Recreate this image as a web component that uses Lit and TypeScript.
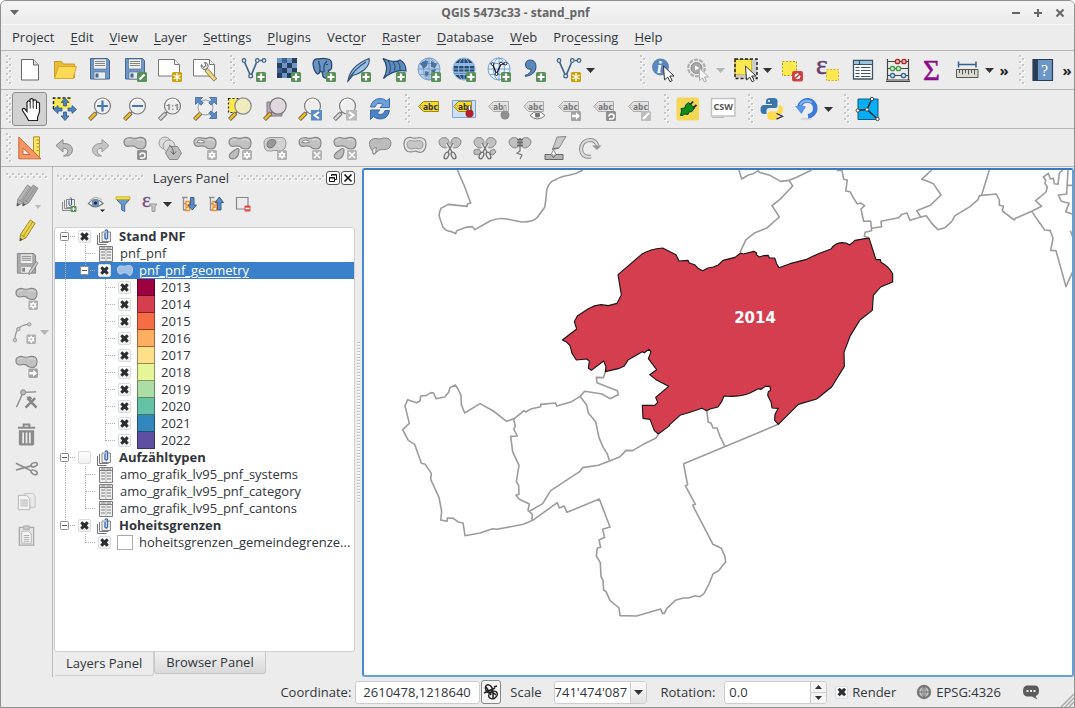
import { LitElement, html, svg, css, nothing } from "lit";
import type { TemplateResult } from "lit";
import { customElement, property, state } from "lit/decorators.js";
import { classMap } from "lit/directives/class-map.js";

/* ---------- shared icon fragments ---------- */

const badge = (fill: string, glyph: unknown) =>
  svg`<rect x="14" y="14" width="10" height="10" rx="1.5" fill=${fill}/>${glyph}`;
const plusBadge = badge("#5a9159", svg`<path d="M19 15.5v7M15.5 19h7" stroke="#fff" stroke-width="2.2"/>`);
const starGlyph = svg`<path d="M19 15v8M15.5 17l7 4M22.5 17l-7 4" stroke="#fff" stroke-width="1.4"/>`;
const starBadge = badge("#c9a20c", starGlyph);
const greyStar = badge("#b0b0b0", svg`<path d="M19 14.800l1.300 2.200h2.500L21.500 19l1.300 2.200h-2.500L19 23.400l-1.300-2.200h-2.500L16.500 19l-1.300-2h2.500z" fill="#fff"/><circle cx="19" cy="19" r="1" fill="#b0b0b0"/>`);
const greyCross = badge("#b4b4b4", svg`<path d="M16 16l6 6M22 16l-6 6" stroke="#fff" stroke-width="1.7"/>`);
const greyArrow = badge("#a3a3a3", svg`<path d="M15 17.7h4v-2.4l4 3.7-4 3.7v-2.4h-4z" fill="#fff"/>`);
const greyTurn = badge("#8f8f8f", svg`<path d="M17 22h2.5q2.500 0 2.500-2.500t-2.500-2.500q-2.500 0-2.500 2.500" fill="none" stroke="#fff" stroke-width="1.5"/>`);
const greyPencil = badge("#bdbdbd", svg`<path d="M16 22l6-6" stroke="#fff" stroke-width="2.2"/>`);

const blob = svg`<path d="M1 6Q1 1.800 7 1.500q5 1.600 9 0 7-.5 7 5 0 6.500-5 6.500-4.500-.3-6-2.500-3-1.200-5.500-.3Q1 11 1 6z" fill="#c1c1c1" stroke="#868686" stroke-width="1.200"/><path d="M3 5.500q1-2 5-2M14 4q5-1.500 7 1" fill="none" stroke="#dedede"/>`;
const blobLow = svg`<path d="M11 13.500q-1-2-3.500 0l-3.500 2.500q-3 2-2.700 5 2 3 5.500 1.500 4.200-2 4.200-9z" fill="#bdbdbd" stroke="#868686" stroke-width="1.200"/>`;
const hole = svg`<path d="M4 6.300q.2-2.500 3.500-2.300 4 .2 4 2.500-4 1-7.500-.2z" fill="#f4f4f4" stroke="#868686"/>`;
const page = svg`<path d="M.5 1.500h16l5 5v11.500H.5z" fill="#fff" stroke="#777"/><path d="M16.500 1.500v5h5" fill="#eee" stroke="#777"/>`;
const vNodes = svg`<path d="M2.500 4l5.500 12.500M9.500 16.500l5-12M17.500 2.500h2.500" fill="none" stroke="#436482" stroke-width="1.700"/><g fill="#dbe7f2" stroke="#436482" stroke-width="1.200"><circle cx="2" cy="2.500" r="1.800"/><circle cx="8.700" cy="18" r="1.900"/><circle cx="15.300" cy="2.500" r="1.800"/><circle cx="22" cy="2.500" r="1.800"/></g>`;
const handle = (c: string) =>
  svg`<path d="M1.500 22.500l6.500-6.500" stroke="#555" stroke-width="4"/><path d="M1.800 22.200l6-6" stroke=${c} stroke-width="2.600"/><path d="M7.500 16.500l2.500-2.500" stroke="#777" stroke-width="2"/>`;
const lens = (inner: unknown, c = "#f5bd1b") =>
  svg`${handle(c)}<circle cx="14.500" cy="9" r="8" fill="#eeeeee" stroke="#7c7c7c" stroke-width="1.200"/><path d="M8.500 8a6 6 0 0 1 10-4" fill="none" stroke="#fff" stroke-width="1.400"/>${inner}`;
const tag = (fill: string, stroke: string, ink: string, word = "abc", w = 21) =>
  svg`<path d="M1.500 9.500l5-5h${w - 6}v10h-${w - 6}z" fill=${fill} stroke=${stroke}/><circle cx="4.500" cy="9.500" r="1" fill="#fff" stroke=${stroke} stroke-width=".6"/><text x="6" y="12.500" font-size="8.500" font-weight="700" font-family="Noto Sans, sans-serif" fill=${ink}>${word}</text>`;
const greyTag = (word = "abc") => tag("#e2e2e2", "#aaa", "#777", word);
const cursor = svg`<path d="M11.500 8l10.500 10h-4.200l2.400 4.600-2.200 1.100-2.300-4.600-3.200 2.800z" fill="#fff" stroke="#333" stroke-width="1"/>`;
const pencil = (body: string, edge: string) =>
  svg`<path d="M16 1l5 3.500-9.500 15L5 23l.8-7z" fill=${body} stroke=${edge}/><path d="M18.500 3L8 19M5.800 16l5.700 3.500" stroke=${edge} fill="none" stroke-width=".8"/><path d="M5 23l.4-3.500 2.600 2z" fill="#555"/>`;
const floppy = (a: string, b: string) =>
  svg`<path d="M2.500.5h17l2 2v18.500h-19z" fill=${a} stroke=${b}/><path d="M5.500 1h13v10h-13z" fill="#efefef" stroke=${b} stroke-width=".6"/><path d="M7 3.500h10M7 5.500h10M7 7.500h10" stroke="#777" stroke-width=".9"/><path d="M6 14h11.500v7H6z" fill="#ececec" stroke=${b} stroke-width=".6"/><path d="M7.500 15.500h3v4h-3z" fill=${b}/>`;
const scissors = svg`<g fill="none" stroke="#ececec" stroke-width="3"><path d="M10 16l5-8M14 16L9 8"/></g><g fill="none" stroke="#6f6f6f" stroke-width="1.300"><path d="M10 16l5-9M14 16L9 7"/><ellipse cx="8.500" cy="19.500" rx="2" ry="3.500" transform="rotate(25 8.500 19.500)"/><ellipse cx="15.500" cy="19.500" rx="2" ry="3.500" transform="rotate(-25 15.500 19.500)"/></g>`;
const pair = svg`<path d="M10.800 9.500Q9 13 5 11.500.5 9.500 1 4.500q2.500-4 7-2.800 4 2 2.800 7.800z" fill="#c0c0c0" stroke="#8a8a8a"/><path d="M13.200 9.500q1.800 3.500 5.800 2 4.500-2 4-7-2.500-4-7-2.800-4 2-2.800 7.800z" fill="#c0c0c0" stroke="#8a8a8a"/>`;
const globe = (fill: string, line: string) =>
  svg`<circle cx="12" cy="11" r="11" fill=${fill} stroke=${line}/><g fill="none" stroke=${line}><ellipse cx="12" cy="11" rx="5.500" ry="11"/><path d="M12 0v22M1 11h22M2.500 5.500h19M2.500 16.500h19"/></g>`;

const icons: Record<string, unknown> = {
  newdoc: svg`<path d="M3.500 1.500h12l5 5.500v15h-17z" fill="#fff" stroke="#666"/><path d="M15.500 1.500v5.500h5" fill="#ddd" stroke="#666"/>`,
  open: svg`<path d="M1.500 20V3.500h7l2 2.500h11v14z" fill="#e8bd35" stroke="#c99c26"/><path d="M1.500 20.500l4-12h18l-3.500 12z" fill="#fcda55" stroke="#d7ab30"/>`,
  save: floppy("#6f97c7", "#476892"),
  saveas: svg`${floppy("#6f97c7", "#476892")}${badge("#5a9159", svg`<path d="M16.500 21.500l5-5" stroke="#fff" stroke-width="2.200"/>`)}`,
  composer: svg`${page}${starBadge}`,
  composers: svg`${page}<path d="M13 11.500l9.500 10.500" stroke="#8c7434" stroke-width="4.500"/><path d="M13.500 12l8.500 9.500" stroke="#ecd58c" stroke-width="3"/><path d="M8.500 6.500a3.500 3.500 0 1 0 3 -2l1.500 3-2.500 2z" fill="#ddd" stroke="#666"/>`,
  vector: svg`${vNodes}${plusBadge}`,
  raster: svg`<path d="M0 0h20v20H0z" fill="#6d96c4"/><path d="M0 5h5v-5h5v5h-5v5H0zM10 5h5v5h-5zM15 0h5v5h-5zM5 10h5v5H5zM15 10h5v5h-5zM0 15h5v5H0zM10 15h5v5h-5z" fill="#24405f"/><path d="M5 0h5v5H5zM0 10h5v5H0z" fill="#3c628d"/>${plusBadge}`,
  postgis: svg`<path d="M7 1Q1 0 1 6q1 8 4.500 10 2 0 2.500-3 1 1 2 .500l1 5q2 2.500 4.500 1 1.500-5 1-7 2 0 3-2Q21 1 15 .800 11 0 7 1z" fill="#6a93c4" stroke="#27486f" stroke-width="1.300"/><path d="M6.500 3q2 5 1.500 10M15 3q-4 4-3 9 1 2-1 2M14 6.500h2" fill="none" stroke="#27486f" stroke-width="1.200"/>${plusBadge}`,
  feather: svg`<path d="M1 23Q3 8 22 .500q1.500 6-5 11.500-5 4-11.500 5.500z" fill="#9ec0e2" stroke="#30547c" stroke-width="1.200"/><path d="M1 23Q7 11 19 4" fill="none" stroke="#30547c" stroke-width="1.400"/>${plusBadge}`,
  fin: svg`<path d="M1 .500q12 5 17 1.500 6 3 6 11Q12 11 1.500 20.500 8 9 1 .500z" fill="#5f8cbf" stroke="#27486f" stroke-width="1.200"/><path d="M6 2.500q4 6 1.500 12.500M11 3.500q3.500 5 1.500 9M15.500 3q3.500 5 2.500 9" fill="none" stroke="#27486f"/>${plusBadge}`,
  wms: svg`${globe("#b4cde8", "#7ba0cb")}<path d="M3 6q4-5 8-3l-1 5-4 3-1-3zM14 3l6 3-2 4-4-1zM8 13l4 1-2 5-2-2zM14 12l5-1-2 6-2-1z" fill="#4a719f"/>${plusBadge}`,
  wcs: svg`${globe("#2c4a6b", "#8cb8e6")}<path d="M2 7h20M2 14.500h20" stroke="#8cb8e6" stroke-width="2"/>${plusBadge}`,
  wfs: svg`${globe("#eef5fc", "#74a3d8")}<path d="M5.500 6l4 10 4.500-10h4" fill="none" stroke="#223" stroke-width="1.400"/><g fill="#fff" stroke="#223"><circle cx="5.500" cy="6" r="1.400"/><circle cx="9.500" cy="16" r="1.500"/><circle cx="14" cy="5.500" r="1.400"/><circle cx="18.500" cy="5.500" r="1.400"/></g>${plusBadge}`,
  comma: svg`<path d="M3 17.500q6-2 6.200-6.500Q4 12 3.500 7 3.500 2 8.500 2q5.500.3 5.500 7 0 7.500-10.500 9.500z" fill="#5b86b8" stroke="#2e5580"/>${plusBadge}`,
  newvector: svg`${vNodes}${starBadge}`,
  identify: svg`<circle cx="8.500" cy="9" r="8.500" fill="#5b87bd"/><text x="5" y="15" font-size="17" font-weight="700" font-style="italic" font-family="Liberation Serif, serif" fill="#fff">i</text>${cursor}`,
  action: svg`<circle cx="9.500" cy="10" r="8.300" fill="#ececec" stroke="#b0b0b0" stroke-width="2.200" stroke-dasharray="4 1.200"/><circle cx="9.500" cy="10" r="5.500" fill="#a8a8a8" stroke="#8e8e8e"/><path d="M8 7.500l4.500 2.500-4.500 2.500z" fill="#fff"/><path d="M12.500 10l9 9h-4l2 4-2 1-2-4-3 2.500z" fill="#f4f4f4" stroke="#aaa"/>`,
  select: svg`<path d="M1 1.500h17v15.500H1z" fill="#fce94f" stroke="#a98b1a"/><path d="M18 1.500h5v18.500H1v-3h17z" fill="#ccc"/><path d="M1 1h22v19.500H1z" fill="none" stroke="#222" stroke-width="1.500" stroke-dasharray="3 2"/>${cursor}`,
  deselect: svg`<path d="M1.500 3.500h14v14h-14z" fill="#fce94f" stroke="#b59a20" stroke-dasharray="2 1.500"/><rect x="11" y="13" width="11" height="10.500" rx="2" fill="#d94141"/><circle cx="16.500" cy="18.300" r="3.500" fill="#fff" stroke="#a33"/><path d="M14 20.500l5-4.500" stroke="#d22" stroke-width="1.500"/>`,
  expr: svg`<text x="0" y="15.500" font-size="28" font-family="Liberation Serif, serif" fill="#6b3f70" stroke="#6b3f70" stroke-width=".5">ε</text><path d="M10.500 11.500h12v11h-12z" fill="#fce94f" stroke="#d1b52e" stroke-dasharray="2 1.500"/>`,
  table: svg`<path d="M2.500 2.500h19v18.500h-19z" fill="#fff" stroke="#3b5366" stroke-width="1.300"/><path d="M3 3h18v3.500H3z" fill="#9cc3de"/><path d="M2.500 6.500h19M8.500 3v3M4.500 9.500h4M10 9.500h9.500M4.500 12.500h4M10 12.500h9.500M4.500 15.500h4M10 15.500h9.500M4.500 18.500h4M10 18.500h9.500" stroke="#3b5366" stroke-width="1.200"/>`,
  abacus: svg`<path d="M1.500 1v21M22.500 1v21M0 22h24M0 23.500h24M1.500 3.500h21M1.500 10.500h21M1.500 17.500h21" stroke="#444" stroke-width="1.200"/><g stroke-width="1.300"><g fill="#f6b8b8" stroke="#a22"><circle cx="11.500" cy="3.500" r="2.200"/><circle cx="18" cy="3.500" r="2.200"/></g><g fill="#c8ecc8" stroke="#4a944a"><circle cx="6.500" cy="10.500" r="2.200"/><circle cx="12.500" cy="10.500" r="2.200"/></g><g fill="#c4dcf2" stroke="#3d6590"><circle cx="6.500" cy="17.500" r="2.200"/><circle cx="17.500" cy="17.500" r="2.200"/></g></g>`,
  sigma: svg`<text x="2" y="21.500" font-size="29" font-family="Liberation Serif, serif" fill="#8b0a8b" stroke="#8b0a8b" stroke-width=".5">Σ</text>`,
  measure: svg`<path d="M2.500 6.500h17.500M2.500 3.500v6M20 3.500v6" stroke="#33618f" stroke-width="1.500"/><path d="M.5 11.500h21.500v8H.5z" fill="#d8dccf" stroke="#555"/><path d="M3.500 12v3M6.500 12v4.500M9.500 12v3M12.500 12v4.500M15.500 12v3M18.500 12v4.500" stroke="#555"/>`,
  help: svg`<path d="M2 1.500h19.500v21H2z" fill="#6c96c8" stroke="#2b3e55" stroke-width="1.200"/><path d="M2 1.500h5v21H2z" fill="#2b3e55"/><text x="10" y="17.500" font-size="16" font-family="Liberation Serif, serif" fill="#fff">?</text>`,
  pan: svg`<g transform="translate(4 .5)"><path d="M6.500 23L5 20l-4.500-7q-.5-2.500 2-2l2.500 3V5q.5-2 2-1.500l1 .5 0-2q2-1.800 3.200 0V3q2-1.500 3.300.500v1.500q2.500-1 3 1v8.500l-2 5.500V23z" fill="#fff" stroke="#222" stroke-width="1.200"/><path d="M8.200 4v7M11.200 3v8M14.500 4v7.500" stroke="#222"/></g>`,
  panselect: svg`<path d="M.5 1h17v11H.5z" fill="#fce94f"/><path d="M.5 12V1h17" fill="none" stroke="#222" stroke-width="1.500" stroke-dasharray="3 2"/><g fill="#4f81bd" stroke="#2e5a90" stroke-width=".8"><path d="M12 1l4 4.500h-2.500V9h-3V5.500H8zM12 23.500l-4-4.500h2.500v-4h3v4H16zM.500 12.500l4.500-4V11h4v3H5v2.500zM23.500 12.500l-4.500-4V11h-4v3h4v2.500z"/></g>`,
  zoomin: lens(svg`<path d="M14.500 3.500v11M9 9h11" stroke="#4377ad" stroke-width="2.200"/>`),
  zoomout: lens(svg`<path d="M9 9h11" stroke="#4377ad" stroke-width="2.200"/>`),
  zoomone: lens(svg`<text x="7.800" y="12.500" font-size="9.500" font-weight="700" font-family="Noto Sans, sans-serif" fill="#888">1:1</text>`, "#d6d6d6"),
  zoomfull: svg`${handle("#f5bd1b")}<circle cx="12.500" cy="10.500" r="7.500" fill="#eee" stroke="#999"/><g fill="#5b8cc4" stroke="#2e5a90" stroke-width=".7"><path d="M2.500.500h7L7.200 2.800l3 3-2.400 2.400-3-3L2.500 7.500zM23.500.500v7l-2.300-2.300-3 3-2.400-2.400 3-3L16.500.500zM23.500 21.500h-7l2.300-2.300-3-3 2.400-2.400 3 3 2.300-2.300z"/></g>`,
  zoomsel: svg`<path d="M.5 1.500h13v14H.5z" fill="#fce94f" stroke="#222" stroke-width="1.200" stroke-dasharray="2 2"/>${handle("#f5bd1b")}<circle cx="15" cy="9" r="8.200" fill="#f1ecbf" stroke="#888" stroke-width="1.200"/>`,
  zoomlayer: svg`<path d="M4 5h15v14H4z" fill="#b9aab9" stroke="#857585"/>${handle("#f5bd1b")}<circle cx="15" cy="9" r="8.200" fill="#e0dae0" fill-opacity=".95" stroke="#777" stroke-width="1.200"/>`,
  zoomlast: svg`${lens(nothing)}<path d="M13 13h11v10.500H13z" fill="#5b8cc4"/><path d="M21 15l-4.500 3.300L21 21.500" fill="none" stroke="#fff" stroke-width="2"/>`,
  zoomnext: svg`${lens(nothing, "#d6d6d6")}<path d="M13 13h11v10.500H13z" fill="#bbb"/><path d="M16 15l4.500 3.300L16 21.500" fill="none" stroke="#fff" stroke-width="2"/>`,
  refresh: svg`<path d="M2.500 10Q4 2 12 1.500q4 0 6.500 2.500l3-2.500v9h-9.500l3-3Q9 4 7 10z" fill="#6d9fd8" stroke="#3b6ca8"/><path d="M21.500 13.500Q20 22 12 22q-4 0-6.500-2.500l-3 3v-9.500h9.500l-3 3.500q6 3 8-3z" fill="#4b83c6" stroke="#3b6ca8"/>`,
  label: tag("#f3d92c", "#a08a10", "#333"),
  labelpin: svg`<path d="M.5 3.500h23v17H.5z" fill="#cfe0f5" stroke="#7ba7dd"/>${tag("#f3d92c", "#a08a10", "#333", "ab", 19)}<circle cx="17.500" cy="16.500" r="4" fill="#b3202a"/><path d="M16.500 13V8.500h2V13" fill="#fff" stroke="#777"/>`,
  labelpin2: svg`${greyTag("ab")}<circle cx="18" cy="18" r="4.500" fill="#8f8f8f"/><path d="M17 14V8.500h2V14" fill="#fff" stroke="#999"/>`,
  labelshow: svg`${greyTag()}<path d="M8 18.500q7.500-8 15 0-7.500 7-15 0z" fill="#fff" stroke="#777"/><circle cx="15.500" cy="18" r="2.600" fill="#777"/>`,
  labelmove: svg`${greyTag()}${greyArrow}`,
  labelrot: svg`${greyTag()}${greyTurn}`,
  labeledit: svg`${greyTag()}${greyPencil}`,
  plug: svg`<rect x=".5" y=".5" width="22.500" height="23" rx="2.500" fill="#f3d755"/><path d="M4.500 18.500l1-4.500-.5-2.500 4-.5.5-3 3-2.500 6 5.500-2.500 3.500-3 .5-1 2.500-3.500-.5-1.500 1.500z" fill="#118a1c" stroke="#0a4a10"/><path d="M14.500 7.500l2.500-3M17.500 10.500l3-2.500" stroke="#222" stroke-width="1.800"/>`,
  csw: svg`<path d="M.5 1.500h23.500v17.500H.5z" fill="#fff" stroke="#c2c2c2" stroke-width="1.500"/><path d="M1 20.500h12" stroke="#bbb"/><text x="2.500" y="13" font-size="9" font-weight="700" font-family="Noto Sans, sans-serif" fill="#555">CSW</text>`,
  python: svg`<path d="M10.500 1q-4.500 0-4.500 3v3h6v1H4Q.5 8 .5 12.500T4 17h2.500v-3q0-3 3-3H15q2.500 0 2.500-2.500V4q0-3-4-3z" fill="#3a76ab"/><circle cx="9" cy="4" r="1" fill="#fff"/><path d="M13.500 23q4.500 0 4.500-3v-2.500h-6V17h8q3 0 3-4.500T20 8.500h-1.500v3q0 3-3 3h-5.500q-2.500 0-2.500 2.500v3q0 3 4 3z" fill="#ffd94a"/><path d="M16.500 16.500l6 2.800-6 2.800" fill="none" stroke="#222" stroke-width="1.200"/>`,
  reload: svg`<ellipse cx="11" cy="22" rx="6" ry="1.200" fill="#d4d8de"/><path d="M4.500 9.500A8 8 0 1 1 13 19.300" fill="none" stroke="#3a7bdc" stroke-width="4.600"/><path d="M5 8A8 8 0 0 1 17 5.500" fill="none" stroke="#86b4f2" stroke-width="2"/><path d="M0 9h10.500v1.500L6.500 17z" fill="#5a95e8"/>`,
  topology: svg`<path d="M2 2h20v20.500H2z" fill="#06aef5" stroke="#155a7c"/><path d="M1 13.500l10-1 5-11M11 12.500l10.500 9.500" fill="none" stroke="#222" stroke-width="1.400"/><g fill="#fff" stroke="#444"><circle cx="1.800" cy="13.500" r="1.700"/><circle cx="11" cy="12.500" r="1.700"/><circle cx="16" cy="2" r="1.700"/><circle cx="21.500" cy="22" r="1.700"/></g>`,
  triangle: svg`<path d="M15.500.800h6v20h-6z" fill="#fbe26a" stroke="#b49526"/><path d="M18.500 4h3M18.500 7.500h3M18.500 11h3M18.500 14.500h3" stroke="#b49526"/><path d="M.800 1v21.800h22.200zM5 12l7 6.500H5z" fill="#f79663" fill-rule="evenodd" stroke="#c96a38"/>`,
  undo: svg`<path d="M3 9.500L10 3.500v4q8.500-.5 9.500 6 0 4.500-4.500 6.500H10.500q5-2 4.500-5-.5-3-5-3v4z" fill="#bcbcbc" stroke="#8a8a8a"/>`,
  redo: svg`<path d="M21 9.500L14 3.500v4q-8.500-.5-9.500 6 0 4.500 4.500 6.500h4.500q-5-2-4.500-5 .5-3 5-3v4z" fill="#c6c6c6" stroke="#9a9a9a"/>`,
  rotate: svg`${blob}${greyTurn}`,
  simplify: svg`<circle cx="7" cy="7" r="6" fill="#ddd" stroke="#999"/><circle cx="11" cy="10" r="6" fill="#ddd" stroke="#999"/><path d="M11.500 10.500h8l4 6.500-4 6.500h-8L7.500 17z" fill="#bdbdbd" stroke="#888"/><path d="M11 9q4.500 2 4.500 9M13 15.500l2.500 3 2.500-3" fill="none" stroke="#666"/>`,
  ring: svg`${blob}${hole}${greyStar}`,
  part: svg`${blob}${blobLow}${greyStar}`,
  fillring: svg`<path d="M1 6Q2 1.500 8 1.500h11q4 .5 4 6t-4 7h-8q-8 2-9.500-2.500z" fill="#d2d2d2" stroke="#999"/><path d="M4 9q0-5 5-5.500 4 0 4 3-2 5.500-6 5.500-3-.5-3-3z" fill="#999" stroke="#777"/>${greyStar}`,
  delring: svg`${blob}${hole}${greyCross}`,
  delpart: svg`${blob}${blobLow}${greyCross}`,
  reshape: svg`<path d="M1.500 8.500Q1 3 7 2.500q5 1 9-.5 6.500-.5 7 5-.5 7-7 6.500-4-1-8 3Q5 21 4.500 15 2 12.500 1.500 8.500z" fill="#bcbcbc" stroke="#888"/><path d="M4.500 14q.5-2.500 4-2.500-1 2.500-.5 4.500-3 4-3.500-2z" fill="#eee" stroke="#888"/>`,
  offset: svg`<path d="M1 8q0-7 7-6.500 4 1.200 8 0 7 0 7 6.500 0 7-5.500 8.500-3-.5-5-1.500-5 1.500-8 .5Q1 13 1 8z" fill="#e4e4e4" stroke="#888" stroke-width="1.200"/><path d="M4 8.500Q4 4.500 8.500 4.500q4 1.200 7 0 4.500 0 4.500 4 0 4-3.500 4.500-4-1.500-8.500 0Q4 12.500 4 8.500z" fill="#c6c6c6" stroke="#999"/>`,
  split: svg`${pair}${scissors}`,
  splitpart: svg`${pair}<path d="M1 14l5-1 2 3-3 3-4-1zM17 15l4-2 2 3-3 3-3-1z" fill="#bbb" stroke="#888"/>${scissors}`,
  merge: svg`${pair}<path d="M9 3.500h6M9 6.500h6M9 9.500h6M12 2v10" stroke="#666" stroke-width="1.300"/><path d="M12 12v3l-3 2 5 2-2 4" fill="none" stroke="#777" stroke-width="1.200"/>`,
  nodeadd: svg`<path d="M14 1l9-.5-7 11.500-6.500 1.500z" fill="#c8c8c8" stroke="#8a8a8a"/><path d="M9.500 13l6-1" stroke="#777" stroke-width="1.500"/><path d="M2 18.500h6l2.500 3 2.500-3h7v5H2z" fill="#b5b5b5" stroke="#666"/><path d="M10.500 14l2 3.500-2 3-2-3z" fill="#fff" stroke="#888"/>`,
  rotpoint: svg`<path d="M13 20.500Q4 22 3 13.500 3.500 4.500 12 4q6 0 7.500 6" fill="none" stroke="#8a8a8a" stroke-width="4"/><path d="M13 20.500Q4 22 3 13.500 3.500 4.500 12 4q6 0 7.500 6" fill="none" stroke="#dcdcdc" stroke-width="2.200"/><path d="M14 9.500h9.500L19 14z" fill="#999"/>`,
  pencils: svg`<g transform="translate(-3 -1)">${pencil("#b5b5b5", "#8d8d8d")}</g><g transform="translate(3 -1)">${pencil("#a8a8a8", "#8d8d8d")}</g>`,
  pencil: pencil("#e9d44a", "#9b8a2c"),
  saveedit: svg`${floppy("#ababab", "#858585")}<path d="M22 9l2 1.500-6.500 10-3 2 .5-3.500z" fill="#ccc" stroke="#888"/>`,
  addfeature: svg`${blob}${greyStar}`,
  curve: svg`<path d="M2 20Q2 4 17 3.500" fill="none" stroke="#999" stroke-width="1.400"/><g fill="#ccc" stroke="#999"><circle cx="2" cy="20" r="1.800"/><circle cx="5.500" cy="8.500" r="1.800"/><circle cx="17" cy="3.500" r="1.800"/></g>${greyStar}`,
  movefeature: svg`${blob}${greyArrow}`,
  node: svg`<path d="M1.500 19L8.500 3.500 22 3" fill="none" stroke="#8a8a8a" stroke-width="1.400"/><circle cx="8.500" cy="3.500" r="2.700" fill="#bbb" stroke="#888"/><path d="M11 19.500l10-10M13 9.500l9.500 10" stroke="#888" stroke-width="2.600"/><path d="M12 8l4-.500 2 2.500-3 2.500z" fill="#888"/>`,
  trash: svg`<path d="M3 5h18M9 4V1.500h6V4" fill="none" stroke="#8b8b8b" stroke-width="2"/><path d="M4 7.500h16v14.500q0 1.500-1.500 1.500h-13Q4 23.500 4 22z" fill="#8b8b8b"/><path d="M8.500 10v11M12 10v11M15.500 10v11" stroke="#ececec" stroke-width="1.800"/>`,
  cut: svg`<path d="M1 6.500l16 8M1 13.500l17-4.500" stroke="#8b8b8b" stroke-width="1.700"/><g fill="none" stroke="#8b8b8b" stroke-width="1.500"><ellipse cx="20" cy="8" rx="3.500" ry="2" transform="rotate(-20 20 8)"/><ellipse cx="20" cy="16" rx="3.500" ry="2" transform="rotate(28 20 16)"/></g>`,
  copy: svg`<path d="M9.500 2.500h9l2.500 2.500v12H9.500z" fill="#e9e9e9" stroke="#c4c4c4"/><path d="M3.500 4.500h8.500l3.500 3.500v11.500h-12z" fill="#f3f3f3" stroke="#b4b4b4"/><path d="M5.500 9.500h8M5.500 11.500h8M5.500 13.500h8M5.500 15.500h8" stroke="#b4b4b4"/>`,
  paste: svg`<path d="M4.500 2.500h15v18.500h-15z" fill="#e4e4e4" stroke="#aaa" stroke-width="1.400"/><path d="M9 1h6v3.500H9z" fill="#ccc" stroke="#aaa"/><path d="M7 6.500h7l3 3v9.500H7z" fill="#f8f8f8" stroke="#b4b4b4"/><path d="M9 11h6M9 13h6M9 15h6M9 17h6" stroke="#aaa"/>`,
};

const small: Record<string, unknown> = {
  addgroup: svg`<path d="M1.500 6v8.500h8M3.500 4v8.500h8" fill="none" stroke="#888"/><path d="M5.500 3.500h8v8h-8z" fill="#e8e8e8" stroke="#888"/><path d="M8 4.500V9q1.500 1.500 2.500 0V2.500q-1-1.500-1.500 0" fill="none" stroke="#365f91"/><rect x="9.500" y="10" width="6" height="6" rx="1" fill="#5a9159"/><path d="M12.500 11v4M10.500 13h4" stroke="#fff"/>`,
  eye: svg`<path d="M.500 7.500Q7-.5 15 7.500 7 14 .500 7.500z" fill="#fff" stroke="#777" stroke-width="1.200"/><circle cx="7.500" cy="7" r="3.800" fill="#6a93c4"/><circle cx="7.500" cy="7" r="1.600" fill="#222"/><path d="M2 4Q8-1 14 4" fill="none" stroke="#aaa"/><path d="M12 13.500h5l-2.500 2.500z" fill="#222"/>`,
  filter: svg`<path d="M1.500 3.500h13L9.700 9v6.500l-3-1.500V9z" fill="#6c98cc" stroke="#41699b"/><path d="M1 .800h14v2.700H1z" fill="#f4e14a" stroke="#c2a920" stroke-width=".8"/>`,
  exprfilter: svg`<text x="0" y="10.500" font-size="21" font-family="Liberation Serif, serif" fill="#7b5080" stroke="#7b5080" stroke-width=".4">ε</text><path d="M7 8h8L13 10.500v5h-3v-5z" fill="#c6c6c6" stroke="#999"/>`,
  expand: svg`<path d="M1 1.500h5.500M2.500 2v12h3.500M2.500 7.500h3" fill="none" stroke="#8f8f8f" stroke-width="1.300"/><path d="M5 5.500h3.500v3.500H5zM5 11h3.500v3.500H5z" fill="#fff" stroke="#f28a1c" stroke-width="1.300"/><path d="M9.500 1.500h3.500v7.500h2.500l-4.200 5-4.300-5h2.500z" fill="#5b8cc4" stroke="#2e5580" stroke-width=".9"/>`,
  collapse: svg`<path d="M1 1.500h5.500M2.500 2v12h3.500M2.500 7.500h3" fill="none" stroke="#8f8f8f" stroke-width="1.300"/><path d="M5 5.500h3.500v3.500H5zM5 11h3.500v3.500H5z" fill="#fff" stroke="#f28a1c" stroke-width="1.300"/><path d="M9.500 14h3.500V6.500h2.500L11.300 1 7 6.500h2.500z" fill="#5b8cc4" stroke="#2e5580" stroke-width=".9"/>`,
  remove: svg`<path d="M1.500 1.500h11.500v11.500H1.500z" fill="#ececec" stroke="#888" stroke-width="1.200"/><rect x="9.500" y="9.500" width="6" height="6" rx="1" fill="#e04848"/><path d="M10.500 12.500h4" stroke="#fff" stroke-width="1.300"/>`,
  group: svg`<path d="M.500 6v9.500h9M2.500 4v9.500h9" fill="none" stroke="#777"/><path d="M5 3h8.500v9.500H5z" fill="#eee" stroke="#888"/><path d="M8 4v5q1.500 2 2.500 0V1.500Q9 0 8 2" fill="none" stroke="#3e6db5" stroke-width="1.400"/>`,
  tbl: svg`<path d="M1.500.500h13v15h-13z" fill="#efefef" stroke="#7d7d7d"/><path d="M2 3.500h12M3 2h4M9 2h4M3 6h4M9 6h4M3 9h4M9 9h4M3 12h4M9 12h4" stroke="#7d7d7d"/><path d="M8 1v14" stroke="#999" stroke-width=".6"/>`,
  poly: svg`<path d="M.5 6q.2-3.500 4.500-3 3 1 5.500-.5 5-.5 5 3.500 0 5.500-2.500 6.500-2-.5-3.500-2.500-3-1-5.500 1-3.500.5-3.500-5z" fill="#9fc0e4" stroke="#b9d2ee"/>`,
};

const icon = (name: string) => html`<svg class="ic" viewBox="0 0 24 24" aria-hidden="true">${icons[name]}</svg>`;
const smallIcon = (name: string) => html`<svg class="sm" viewBox="0 0 16 16" aria-hidden="true">${small[name]}</svg>`;
const down = html`<svg class="tri" viewBox="0 0 9 5" aria-hidden="true"><path d="M0 0h9L4.500 5z"/></svg>`;

/* ---------- data ---------- */

const menus: [string, string, string][] = [
  ["Pro", "j", "ect"], ["", "E", "dit"], ["", "V", "iew"], ["", "L", "ayer"], ["", "S", "ettings"],
  ["", "P", "lugins"], ["Vect", "o", "r"], ["", "R", "aster"], ["", "D", "atabase"], ["", "W", "eb"],
  ["Pro", "c", "essing"], ["", "H", "elp"],
];

/* A trailing "+" adds a drop-down arrow, "-" a disabled one. */
const bars: string[][][] = [
  [
    ["newdoc", "open", "save", "saveas", "composer", "composers"],
    ["vector", "raster", "postgis", "feather", "fin", "wms", "wcs", "wfs", "comma", "newvector+"],
    ["identify", "action-", "select+", "deselect", "expr", "table", "abacus", "sigma", "measure+", "»"],
    ["help", "»"],
  ],
  [
    ["pan", "panselect", "zoomin", "zoomout", "zoomone", "zoomfull", "zoomsel", "zoomlayer", "zoomlast", "zoomnext", "refresh"],
    ["label", "labelpin", "labelpin2", "labelshow", "labelmove", "labelrot", "labeledit"],
    ["plug", "csw"],
    ["python", "reload+"],
    ["topology"],
  ],
  [
    ["triangle", "undo", "redo", "rotate", "simplify", "ring", "part", "fillring", "delring", "delpart", "reshape", "offset", "split", "splitpart", "merge", "nodeadd", "rotpoint"],
  ],
];

const editTools = ["pencils", "pencil", "saveedit", "addfeature", "curve", "movefeature", "node", "trash", "cut", "copy", "paste"];

interface Row {
  cells: string;
  text: string;
  check?: boolean;
  icon?: string;
  swatch?: string;
  bold?: boolean;
  selected?: boolean;
}

const years: [string, string][] = [
  ["2013", "#9e0142"], ["2014", "#d53e4f"], ["2015", "#f46d43"], ["2016", "#fdae61"], ["2017", "#fee08b"],
  ["2018", "#e6f598"], ["2019", "#abdda4"], ["2020", "#66c2a5"], ["2021", "#3288bd"], ["2022", "#5e4fa2"],
];

/* cells: e/x/z expander (first, middle, end of line), | line, T branch, L last branch, . blank */
const rows: Row[] = [
  { cells: "e", text: "Stand PNF", check: true, icon: "group", bold: true },
  { cells: "|T", text: "pnf_pnf", icon: "tbl" },
  { cells: "|z", text: "pnf_pnf_geometry", check: true, icon: "poly", selected: true },
  ...years.map(([text, swatch], i): Row => ({ cells: i < 9 ? "|.T" : "|.L", text, check: true, swatch })),
  { cells: "x", text: "Aufzähltypen", check: false, icon: "group", bold: true },
  { cells: "|T", text: "amo_grafik_lv95_pnf_systems", icon: "tbl" },
  { cells: "|T", text: "amo_grafik_lv95_pnf_category", icon: "tbl" },
  { cells: "|L", text: "amo_grafik_lv95_pnf_cantons", icon: "tbl" },
  { cells: "z", text: "Hoheitsgrenzen", check: true, icon: "group", bold: true },
  { cells: ".L", text: "hoheitsgrenzen_gemeindegrenze...", check: true, swatch: "#ffffff" },
];

const strokes: Record<string, string> = {
  "|": "M10.500 0v17",
  T: "M10.500 0v17M11 8.500h9",
  L: "M10.500 0v9M11 8.500h9",
  e: "M10.500 2v15M15 8.500h5",
  x: "M10.500 0v17M15 8.500h5",
  z: "M10.500 0v8M15 8.500h5",
  ".": "",
};

/* ---------- map canvas ---------- */

@customElement("map-canvas")
export class MapCanvas extends LitElement {
  static styles = css`
    :host {
      display: block;
      min-width: 0;
      overflow: hidden;
      background: #fff;
      border: 2px solid;
      border-color: #3a7cc4 #62a0e4 #62a0e4 #4a8ad2;
      border-radius: 3px;
    }
    .map { display: block; width: 100%; height: 100%; }
    .line { fill: none; stroke: #9c9c9c; stroke-width: 4.8; stroke-linejoin: round; }
    .area { fill: #d53e4f; stroke: #161616; stroke-width: 3.4; stroke-linejoin: round; }
    .year { font: 700 15px "DejaVu Sans", sans-serif; fill: #fff; text-anchor: middle; }
  `;

  render() {
    return html`<svg class="map" role="img" aria-label="Map">
      <g transform="translate(-364 -170)">
        <g class="line" transform="translate(390 365) scale(.33333)">
          <path d="M647 18L640 38 619 37 621 53 682 77 685 89 660 101 636 87 584 79 570 94 545 110 500 123 497 114 452 118 452 125 425 131 407 141 402 137 374 160 350 169 310 138 270 116 224 144 214 119 213 92 204 72 196 60 180 68 176 82 164 96 138 101 131 84 123 83 108 92 92 93 90 108 80 113 53 104 45 123 58 175 38 194 55 226 74 238 94 295 106 298 124 325 122 343 147 397 155 440 152 465 171 469 172 459 190 460 205 471 219 474 225 512 270 504 308 491 320 493 400 478 428 466 502 413 508 429 522 423 531 442 628 402 660 486 638 493 644 517 627 525 632 547 622 549 619 573 631 593 633 635 639 646 641 675 648 680 660 706 687 729 690 752 740 753 812 732 817 745 823 745 830 731 856 706 880 699 896 699 915 692 930 695 942 686 957 657 969 627 987 616 1007 590 1004 572 994 550 969 538 908 421 916 418 886 362 893 359 886 325 881 296 1165 178"/>
          <path d="M374 160L371 163 376 184 371 192 382 213 362 214 368 260 387 301 379 350 386 362 387 388 378 391 388 403 418 417 414 436 427 448 426 466"/>
          <path d="M570 94L590 120 595 144 617 170 627 218 640 248 651 265 659 288"/>
          <path d="M805 208L797 220 760 238 728 257 708 256 690 275 659 288 625 301 578 308 570 319 482 377 458 416 419 438"/>
          <path d="M950 136L955 172 963 174 969 189 981 189 990 214 1005 245"/>
        </g>
        <g class="line" transform="translate(360 165) scale(.33333)">
          <path d="M292 15L314 65 332 114 322 117 322 124 265 118 243 130Q236 145 238 155L249 187Q260 200 272 199L287 206 290 197 318 187 337 185 345 194 390 168Q415 157 440 162L485 171Q520 172 532 157L554 127Q559 100 560 75 568 48 585 45 605 33 630 30 650 26 669 15"/>
        </g>
        <g class="line" transform="translate(740 165) scale(.33333)">
          <path d="M0 262L18 224 45 203 82 188 118 156 96 122 120 103 158 63 147 46 122 49 90 31 58 22 55 17 40 26 25 30 5 42-3 15M147 46L170 37 215 15"/>
          <path d="M290 16L306 16 311 43 322 45 317 78 330 80 338 95 352 117 362 114 374 122 363 132 371 169 392 168 395 197 375 202 373 214 386 218"/>
          <path d="M395 190L425 185 423 169 476 158 486 148 501 144 510 166 542 156 559 152 576 176 594 194 615 188 635 170 645 152 690 125 714 104 718 92 769 87 778 105 778 121 790 124 787 138 823 165 826 160 875 139 905 124 887 107 918 81 922 66 915 55 917 45 910 36 925 25 931 42 940 40 943 56 954 58 958 25 968 15"/>
          <path d="M542 156L530 137 571 121 603 90 580 56 569 51 545 43 575 15M725 90L748 15"/>
          <path d="M875 139L914 195 931 197 939 220 932 256 948 257 978 365 1000 316M984 15L980 87 955 90 964 109 987 115 977 140 1000 148M983 61L1000 61M991 197L998 215"/>
        </g>
        <g transform="translate(550 225) scale(.33333)">
          <path class="area" d="M37 345L80 312 73 290 82 273 115 251Q133 241 153 239L175 242 201 235 214 210 204 149 275 88Q300 72 338 69L378 89 387 108 414 106 418 114 434 119 444 130 458 137 474 129 490 126 505 120 519 106 555 97 572 84 580 87 612 79 620 84 619 89 628 96 640 92 655 91 658 99 674 99 680 116 687 128 720 116 770 103 805 86 843 72Q856 53 875 53L888 54 899 60 915 46 945 41 957 39 978 104 991 104 993 112Q1018 126 1028 147L1028 171 992 186 970 211 967 256 930 285 901 332 882 382 883 424 845 486 800 522 745 538 685 598 674 586 675 568 685 550 666 549 663 531 653 511 655 500 662 496 660 484 646 484 633 493 625 491 600 504Q570 517 522 513L515 530 504 546 480 552 470 557 456 550 420 562 390 571 360 598 356 604 325 627 313 617 300 583 279 580 277 541 314 541 323 532 317 517 356 484 318 464 299 449 320 434 295 401 303 380 297 373 283 383 277 380 235 404 223 423 205 431 166 440 168 425 161 408 124 436 115 430 118 408 110 402 79 405 66 385 60 362 48 350Z"/>
        </g>
        <text class="year" x="755" y="323">2014</text>
      </g>
    </svg>`;
  }
}

/* ---------- layer tree ---------- */

const checkStyles = css`
  .check {
    appearance: none;
    flex: none;
    position: relative;
    width: 13px;
    height: 13px;
    margin: 0;
    border: 1px solid #dcdcdc;
    border-radius: 2px;
    background: linear-gradient(#fdfdfd, #f0f0f0);
  }
  .check:checked::before {
    content: "";
    position: absolute;
    inset: 1px;
    background: #2b2f31;
    clip-path: polygon(25% 3%, 50% 24%, 75% 3%, 97% 25%, 76% 50%, 97% 75%, 75% 97%, 50% 76%, 25% 97%, 3% 75%, 24% 50%, 3% 25%);
  }
`;

@customElement("layer-tree")
export class LayerTree extends LitElement {
  static styles = [checkStyles, css`
    :host {
      display: block;
      overflow: hidden;
      background: #fff;
      border: 1px solid #d0d0d0;
      border-radius: 3px;
    }
    .list { list-style: none; margin: 0; padding: 0; }
    .row { display: flex; align-items: center; height: 17px; white-space: nowrap; }
    .row.selected { background: #3a80cb; color: #fff; }
    .cell { flex: none; width: 20px; height: 17px; }
    .dots { fill: none; stroke: #b0b0b0; stroke-dasharray: 1 1; }
    .box { fill: #fff; stroke: #8c8c8c; }
    .minus { stroke: #555; }
    .check { margin: 0 6px 0 3px; }
    .sm { flex: none; width: 16px; height: 16px; margin-right: 6px; }
    .alone { margin-left: 3px; }
    .swatch { flex: none; box-sizing: border-box; width: 18px; height: 17px; margin-right: 6px; border: 1px solid #0006; border-top-width: 0; }
    .swatch.empty { width: 16px; height: 15px; border: 1px solid #aaa; }
    .bold { font-weight: 700; }
    .selected .name { text-decoration: underline; text-underline-offset: 2px; }
  `];

  private cell(kind: string) {
    const box = "exz".includes(kind);
    return html`<svg class="cell" viewBox="0 0 20 17" aria-hidden="true">
      <path class="dots" d=${strokes[kind]}></path>
      ${box ? svg`<rect class="box" x="5.500" y="4.500" width="8" height="8" rx="1"/><path class="minus" d="M7 8.500h5"/>` : nothing}
    </svg>`;
  }

  render() {
    return html`<ul class="list">${rows.map((r, i) => {
      const hasCheck = r.check !== undefined;
      return html`<li class=${classMap({ row: true, selected: !!r.selected })}>
        ${[...r.cells].map((c) => this.cell(c))}
        ${hasCheck ? html`<input class="check" type="checkbox" id=${"layer" + i} .checked=${!!r.check}>` : nothing}
        ${r.icon ? html`<svg class=${classMap({ sm: true, alone: !hasCheck })} viewBox="0 0 16 16" aria-hidden="true">${small[r.icon]}</svg>` : nothing}
        ${r.swatch ? html`<span class=${classMap({ swatch: true, empty: r.swatch === "#ffffff" })} style="background:${r.swatch}"></span>` : nothing}
        ${hasCheck
          ? html`<label class=${classMap({ name: true, bold: !!r.bold })} for=${"layer" + i}>${r.text}</label>`
          : html`<span class="name">${r.text}</span>`}
      </li>`;
    })}</ul>`;
  }
}

/* ---------- window ---------- */

@customElement("app-root")
export class AppRoot extends LitElement {
  @property() heading = "QGIS 5473c33 - stand_pnf";
  @state() private tab = 0;

  static styles = [checkStyles, css`
    :host {
      --grip: url("data:image/svg+xml,%3Csvg xmlns='http://www.w3.org/2000/svg' width='6' height='6'%3E%3Cpath d='M1 1h2v2H1zM4 4h2v2H4z' fill='%23fff'/%3E%3Cpath d='M0 0h2v2H0zM3 3h2v2H3z' fill='%23c6c6c6'/%3E%3C/svg%3E");
      display: block;
      height: 100vh;
      background: #fff;
      color: #31363b;
      font: 13px/17px "Open Sans", "Noto Sans", sans-serif;
    }
    * { box-sizing: border-box; }
    button, input, select { font: inherit; color: inherit; }
    button { padding: 0; border: 0; background: none; }
    .window {
      display: flex;
      flex-direction: column;
      height: 100%;
      overflow: hidden;
      background: #ececec;
      border: 1px solid #8f8f8f;
      border-radius: 6px 6px 0 0;
    }
    .title {
      display: grid;
      grid-template-columns: 20px 1fr 64px;
      align-items: center;
      flex: none;
      height: 24px;
      padding: 0 9px;
      background: linear-gradient(#f5f5f5, #ebebeb);
      border-bottom: 1px solid #f8f8f8;
      color: #666;
      fill: #666;
    }
    .caption { margin: 0; font-size: 12px; line-height: 17px; font-weight: 700; text-align: center; }
    .wins { display: flex; justify-content: flex-end; gap: 12px; }
    .wins svg { display: block; width: 10px; height: 10px; fill: none; stroke: #666; stroke-width: 2; }
    .tri { display: block; width: 9px; height: 5px; fill: #333; }
    .title .tri { fill: #666; }
    .menu { display: flex; flex: none; height: 26px; padding: 0 3px; border-bottom: 1px solid #b4b4b4; }
    .menu button { padding: 0 8px; }
    .menu u { text-underline-offset: 2px; }
    .bar { display: flex; flex: none; height: 39px; padding-left: 5px; border-bottom: 1px solid #b4b4b4; }
    .bar.last { height: 38px; }
    .group { display: flex; align-items: center; margin-right: 8px; }
    .bar .group:last-child { margin-right: 0; }
    .bar .push { margin-left: auto; }
    .grip { flex: none; width: 6px; height: 30px; background: var(--grip); }
    .tool { display: grid; place-items: center; flex: none; width: 35px; height: 34px; }
    .tool.on { border: 1px solid #8c8c8c; border-radius: 3px; background: #d2d2d2; }
    .ic { display: block; width: 24px; height: 24px; overflow: visible; }
    .drop { display: grid; align-items: center; flex: none; width: 12px; height: 20px; }
    .drop.off .tri { fill: #b4b4b4; }
    .more { width: 14px; font-size: 15px; font-weight: 700; color: #222; }
    .body { display: flex; flex: 1; min-height: 0; }
    .side { display: flex; flex-direction: column; align-items: center; flex: none; width: 51px; padding-top: 6px; }
    .side .hgrip { flex: none; width: 42px; }
    .hgrip { height: 6px; background: var(--grip); }
    .edit { position: relative; display: flex; align-items: center; justify-content: center; flex: none; width: 51px; height: 34px; }
    .edit.wide { justify-content: flex-end; }
    .edit .ic { width: 23px; height: 23px; }
    .edit .corner { position: absolute; right: 11px; bottom: 4px; width: 6px; height: 4px; fill: #bbb; }
    .edit .drop { margin-left: 4px; }
    .dock { display: flex; flex-direction: column; flex: none; width: 303px; padding: 0 0 0 1px; border-left: 1px solid #bcbcbc; }
    .head { display: flex; align-items: center; height: 22px; padding-left: 3px; }
    .head .hgrip { flex: 1; }
    .head h2 { margin: 0 9px; font: inherit; }
    .head button { display: grid; place-items: center; width: 14px; height: 14px; margin-left: 1px; border: 1px solid #555; border-radius: 3px; background: #fafafa; }
    .head button svg { width: 10px; height: 10px; fill: none; stroke: #111; }
    .tools { display: flex; align-items: center; height: 30px; padding-left: 1px; margin-bottom: 8px; }
    .mini { display: grid; place-items: center; width: 27px; height: 26px; }
    .sm { display: block; width: 16px; height: 16px; overflow: visible; }
    .tree { flex: 1; min-height: 0; }
    .tabs { display: flex; align-items: flex-start; flex: none; height: 25px; }
    .tab { height: 22px; padding: 0 11px; border: 1px solid #c8c8c8; border-top: 0; border-radius: 0 0 3px 3px; background: linear-gradient(#f1f1f1, #d9d9d9); }
    .tab.on { height: 24px; border-color: #ececec #cecece #cecece #ececec; background: #ececec; }
    .split { display: flex; align-items: center; justify-content: center; flex: none; width: 7px; }
    .split .dots { width: 3px; height: 160px; background: repeating-linear-gradient(#c4c4c4 0 1px, #fafafa 1px 2px, transparent 2px 3px); }
    .canvas { flex: 1; margin-top: 1px; }
    .status { display: flex; align-items: center; justify-content: flex-end; flex: none; height: 30px; }
    .field { height: 23px; border: 1px solid #cdcdcd; border-radius: 3px; background: #fff; }
    .coord { width: 125px; margin-left: 4px; padding: 0 7px; }
    .mouse { display: grid; place-items: center; width: 20px; height: 24px; margin: 0 9px 0 1px; border: 1px solid #888; border-radius: 3px; background: #f4f4f4; }
    .scale { position: relative; width: 93px; margin: 0 14px 0 12px; overflow: hidden; }
    .scale select { appearance: none; width: 100%; height: 21px; padding: 0 18px 0 0; border: 0; background: none; }
    .scale .arrow { position: absolute; inset: 0 0 0 auto; display: grid; place-items: center; width: 16px; border-left: 1px solid #cdcdcd; background: linear-gradient(#fafafa, #e2e2e2); pointer-events: none; }
    .spin { display: flex; width: 103px; margin: 0 8px 0 9px; overflow: hidden; }
    .spin input { appearance: textfield; flex: 1; min-width: 0; padding: 0 4px; border: 0; background: none; }
    .spin input::-webkit-inner-spin-button { appearance: none; }
    .steps { display: grid; grid-template-rows: 1fr 1fr; width: 16px; border-left: 1px solid #cdcdcd; background: #f4f4f4; }
    .steps button { display: grid; place-items: center; }
    .steps button + button { border-top: 1px solid #cdcdcd; }
    .steps .tri { width: 7px; height: 4px; }
    .up .tri { transform: rotate(180deg); }
    .render { display: flex; align-items: center; gap: 4px; }
    .crs { display: flex; align-items: center; gap: 4px; margin: 0 22px 0 20px; }
    .size { align-self: flex-end; width: 14px; height: 14px; margin-left: 21px; }
  `];

  private tool(entry: string) {
    if (entry === "»") return html`<button class="more" aria-label="More">»</button>`;
    const mark = entry.slice(-1);
    const name = entry.replace(/[+-]$/, "");
    return html`<button class=${classMap({ tool: true, on: name === "pan" })} aria-label=${name}>${icon(name)}</button>
      ${mark === "+" || mark === "-"
        ? html`<button class=${classMap({ drop: true, off: mark === "-" })} aria-label=${name + " options"}>${down}</button>`
        : nothing}`;
  }

  private bar(groups: string[][], index: number) {
    return html`<div class=${classMap({ bar: true, last: index === 2 })} role="toolbar">
      ${groups.map((g, i) => html`<div class=${classMap({ group: true, push: index === 0 && i === 2 })}>
        <span class="grip"></span>${g.map((e) => this.tool(e))}
      </div>`)}
    </div>`;
  }

  private mini(name: string): TemplateResult {
    return html`<button class="mini" aria-label=${name}>${smallIcon(name)}</button>`;
  }

  render() {
    return html`<div class="window">
      <header class="title">
        ${down}
        <h1 class="caption">${this.heading}</h1>
        <div class="wins">
          <button aria-label="Minimize"><svg viewBox="0 0 10 10"><path d="M1 5h8"/></svg></button>
          <button aria-label="Maximize"><svg viewBox="0 0 10 10"><path d="M1 5h8M5 1v8"/></svg></button>
          <button aria-label="Close"><svg viewBox="0 0 10 10"><path d="M1.500 1.500l7 7M8.500 1.500l-7 7"/></svg></button>
        </div>
      </header>
      <nav class="menu">${menus.map(([a, k, b]) => html`<button>${a}<u>${k}</u>${b}</button>`)}</nav>
      ${bars.map((g, i) => this.bar(g, i))}
      <main class="body">
        <aside class="side">
          <span class="hgrip"></span>
          ${editTools.map((t) => html`<div class=${classMap({ edit: true, wide: t === "curve" })}>
            <button aria-label=${t}>${icon(t)}</button>
            ${t === "pencils" ? html`<svg class="corner" viewBox="0 0 6 4"><path d="M0 0h6L3 4z"/></svg>` : nothing}
            ${t === "curve" ? html`<button class="drop off" aria-label="curve options">${down}</button>` : nothing}
          </div>`)}
        </aside>
        <section class="dock">
          <div class="head">
            <span class="hgrip"></span>
            <h2>Layers Panel</h2>
            <span class="hgrip"></span>
            <button aria-label="Float"><svg viewBox="0 0 10 10"><path d="M3.500 3V1.500h5v5H7M1.500 4.500h5v4h-5zM3.500 2h5M1.500 5h5"/></svg></button>
            <button aria-label="Close panel"><svg viewBox="0 0 10 10"><path d="M1.500 1.500l7 7M8.500 1.500l-7 7" stroke-width="1.600"/></svg></button>
          </div>
          <div class="tools">
            ${["addgroup", "eye", "filter", "exprfilter"].map((n) => this.mini(n))}
            <button class="drop" aria-label="filter options">${down}</button>
            ${["expand", "collapse", "remove"].map((n) => this.mini(n))}
          </div>
          <layer-tree class="tree"></layer-tree>
          <div class="tabs" role="tablist">
            ${["Layers Panel", "Browser Panel"].map((t, i) => html`<button role="tab"
              class=${classMap({ tab: true, on: this.tab === i })} @click=${() => (this.tab = i)}>${t}</button>`)}
          </div>
        </section>
        <div class="split"><span class="dots"></span></div>
        <map-canvas class="canvas"></map-canvas>
      </main>
      <footer class="status">
        <label for="coord">Coordinate:</label>
        <input class="field coord" id="coord" .value=${"2610478,1218640"}>
        <button class="mouse" aria-label="Toggle extents"><svg class="sm" viewBox="0 0 16 16"><g fill="none" stroke="#222" stroke-width="1.500"><ellipse cx="6" cy="5" rx="3.200" ry="4.500" transform="rotate(-30 6 5)"/><ellipse cx="10" cy="11" rx="4.500" ry="3.500" transform="rotate(-30 10 11)"/><path d="M3 3l5 8M1 9l11-5M7 6l6 5M11 3l3-1M10 9v5"/></g></svg></button>
        <label for="scale">Scale</label>
        <div class="field scale">
          <select id="scale"><option>741'474'087</option></select>
          <span class="arrow">${down}</span>
        </div>
        <label for="rot">Rotation:</label>
        <div class="field spin">
          <input id="rot" type="number" step="0.1" value="0.0">
          <div class="steps"><button class="up" aria-label="Increase">${down}</button><button aria-label="Decrease">${down}</button></div>
        </div>
        <label class="render"><input class="check" type="checkbox" checked>Render</label>
        <button class="crs"><svg class="sm" viewBox="0 0 16 16"><circle cx="8" cy="8" r="6" fill="#ccc" stroke="#777" stroke-width="2.400"/><path d="M8 1v14M1 8h14M8 3q-5 5 0 10M8 3q5 5 0 10" fill="none" stroke="#777"/></svg>EPSG:4326</button>
        <button aria-label="Messages"><svg class="sm" viewBox="0 0 16 16"><path d="M3.500 1.500h9Q16 2 16 6.500T12.500 12l2 3.500L9 12.500H3.500Q0 11.500 0 7t3.500-5.500z" fill="#5c5c5c"/><path d="M3.500 6h2v2h-2zM7 6h2v2H7zM10.500 6h2v2h-2z" fill="#eee"/></svg></button>
        <svg class="size" viewBox="0 0 14 14" aria-hidden="true"><path d="M1 14L14 1M5 14l9-9M9 14l5-5" stroke="#aaa" stroke-width="1.500"/></svg>
      </footer>
    </div>`;
  }
}
